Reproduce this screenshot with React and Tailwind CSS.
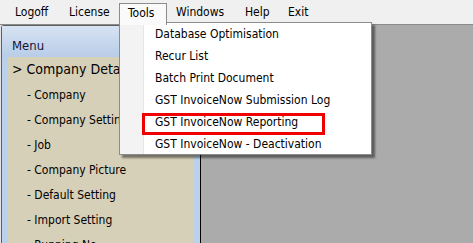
export default function App() {
  const menus = [
    { label: "Logoff", w: "w-[54px]" },
    { label: "License", w: "w-[59px]" },
  ];
  const rest = [
    { label: "Windows", w: "w-[69px]" },
    { label: "Help", w: "w-[43px]" },
    { label: "Exit", w: "w-[40px]" },
  ];
  const drop = [
    "Database Optimisation",
    "Recur List",
    "Batch Print Document",
    "GST InvoiceNow Submission Log",
    "GST InvoiceNow Reporting",
    "GST InvoiceNow - Deactivation",
  ];
  const items = [
    "- Company",
    "- Company Setting",
    "- Job",
    "- Company Picture",
    "- Default Setting",
    "- Import Setting",
    "- Running No",
  ];
  return (
    <div className="relative w-[473px] h-[243px] overflow-hidden bg-[#ababab] font-['DejaVu_Sans_Condensed','DejaVu_Sans',sans-serif] font-stretch-condensed text-[12px] text-black">
      {/* menu bar */}
      <div className="h-[25px] bg-[#f0f0f0] border-b border-[#8a8a8a] flex pl-[6px]">
        {menus.map((m) => (
          <div key={m.label} className={`${m.w} h-full flex items-center pl-[9px] pb-[1px]`}>
            {m.label}
          </div>
        ))}
        <div className="w-[48px] h-[22px] mt-[3px] flex items-center pl-[8px] pb-[4px] bg-[#fafafa] border-l border-t border-r border-[#8c8c8c] relative z-20">
          Tools
        </div>
        {rest.map((m) => (
          <div key={m.label} className={`${m.w} h-full flex items-center pl-[9px] pb-[1px]`}>
            {m.label}
          </div>
        ))}
      </div>

      {/* body */}
      <div className="flex h-[218px]">
        <div className="w-[201px] h-full flex bg-[#e4e4e4] pl-px">
          <div className="flex-1 flex flex-col border-l border-t border-[#5f5f5f] rounded-tl-[3px] border-r border-r-black bg-[#b9d1ea]">
            <div className="h-[31px] shrink-0 bg-gradient-to-b from-[#d7e3f3] to-[#b8cde8] pl-[10px] pt-[12px] text-[13px] leading-[16px] text-[#141432]">
              Menu
            </div>
            <div className="flex-1 mx-[6px] bg-[#d6d0b9] overflow-hidden">
              <div className="h-[25px] flex items-center pl-[4px] text-[14px] whitespace-nowrap">
                &gt; Company Details
              </div>
              {items.map((t) => (
                <div key={t} className="h-[25px] flex items-center pl-[19px] text-[12px] whitespace-nowrap">
                  {t}
                </div>
              ))}
            </div>
          </div>
        </div>
        <div className="flex-1" />
      </div>

      {/* dropdown */}
      <div className="absolute left-[119px] top-[22px] w-[253px] h-[133px] bg-white border border-[#8c8c8c] shadow-[3px_3px_2px_rgba(0,0,0,0.45)] z-10">
        <div className="absolute left-0 top-0 bottom-0 w-[24px] bg-[#f3f3f3] border-r border-[#e6e6e6]" />
        <div className="relative">
          {drop.map((d) => (
            <div key={d} className="h-[22px] flex items-center pl-[35px] whitespace-nowrap">
              {d}
            </div>
          ))}
        </div>
        <div className="absolute left-[22px] top-[90px] w-[183px] h-[22px] border-[3px] border-[#f00000]" />
      </div>
    </div>
  );
}
